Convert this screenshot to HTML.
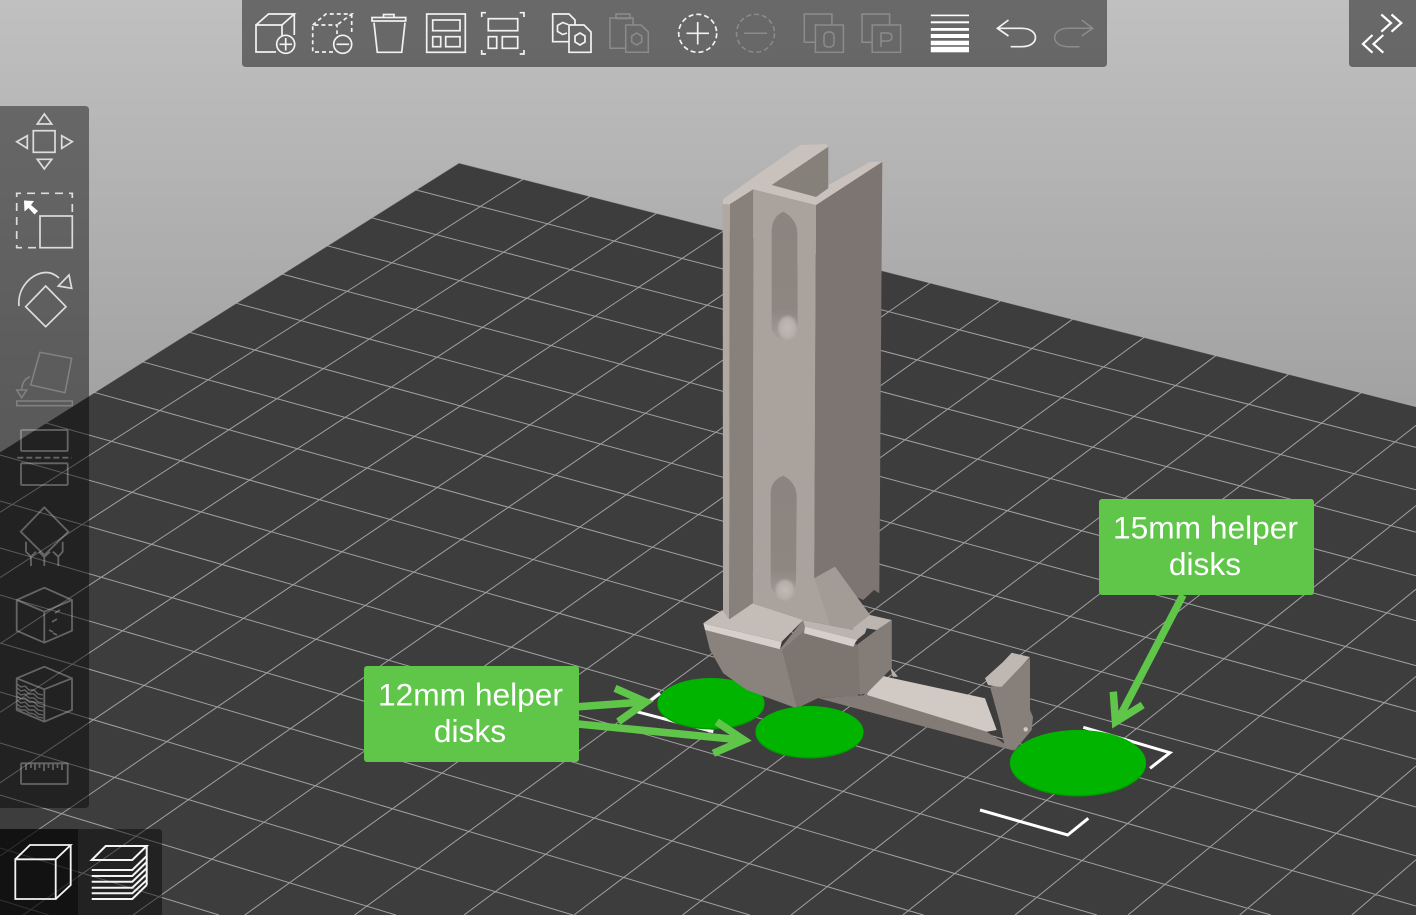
<!DOCTYPE html>
<html lang="en">
<head>
<meta charset="utf-8">
<title>3D build plate view</title>
<style>
html,body{margin:0;padding:0;width:1416px;height:915px;overflow:hidden;background:#aaa}
svg{display:block;width:1416px;height:915px;overflow:hidden}
text{font-family:"Liberation Sans",sans-serif;font-size:31.7px;fill:#fff;text-anchor:middle}
.w{fill:none;stroke:#f2f2f2;stroke-width:1.7}
.d{fill:none;stroke:#f2f2f2;stroke-width:1.5;opacity:.26}
.l{fill:none;stroke:#e6e6e6;stroke-width:1.8;opacity:.34}
</style>
</head>
<body>
<svg width="1416" height="915" viewBox="0 0 1416 915" xmlns="http://www.w3.org/2000/svg">
<defs>
<linearGradient id="bg" x1="0" y1="0" x2="0" y2="1">
<stop offset="0" stop-color="#c0c0c0"/><stop offset=".5" stop-color="#9e9e9e"/><stop offset="1" stop-color="#8a8a8a"/>
</linearGradient>
<linearGradient id="sl" x1="0" y1="0" x2="0" y2="1">
<stop offset="0" stop-color="#8b847f"/><stop offset=".75" stop-color="#8d8681"/><stop offset="1" stop-color="#a8a09b"/>
</linearGradient>
<radialGradient id="bl"><stop offset="0" stop-color="#c2bab5"/><stop offset=".7" stop-color="#b6aea9"/><stop offset="1" stop-color="#b3aba6" stop-opacity="0"/></radialGradient>
</defs>

<rect width="1416" height="915" fill="url(#bg)"/>
<polygon points="459,163 1416,406.7 1416,915 0,915 0,452" fill="#3d3d3d"/>
<path d="M0 452 L459 163 L1416 406.7" fill="none" stroke="#b8b8b8" stroke-width="1" opacity=".5"/>

<!-- grid -->
<path fill="none" stroke="#b9b9b9" stroke-width="1" opacity=".8" d="
M416.2 190 L1416 447.4 M371.2 217.7 L1416 489.8 M327 245.7 L1416 532.2 M282 274 L1416 575.8
M236.6 303.3 L1416 620.7 M189.6 332.3 L1416 665.6 M142.2 361.7 L1416 711.5 M94 392.3 L1416 759.1
M46 423 L1416 807 M0 455 L1416 855.9 M0 501 L1416 906 M0 548 L1270.8 915 M0 595 L1097 915
M0 643 L923.6 915 M0 692 L749.8 915 M0 743 L573 915 M0 795 L395.9 915 M0 848 L219 915 M0 900 L48.6 915
M523 179.3 L0 512.3 M590 196.4 L0 577.6 M656.5 213.3 L0 643.7 M724 230.5 L0 712.3
M792 247.8 L0 782.8 M861 265.4 L0 856 M930 283 L23 915 M1000.3 300.9 L133 915
M1072.5 319.3 L244.8 915 M1144 337.4 L354.6 915 M1215.7 355.7 L464 915 M1288.5 374.3 L574 915
M1361 392.7 L682.5 915 M1416 425.4 L791 915 M1416 505.6 L902.8 915 M1416 589.2 L1015 915
M1416 676.4 L1128 915 M1416 766 L1239.7 915 M1416 859.7 L1351.8 915"/>

<!-- white bounding-box corners -->
<g fill="none" stroke="#fff" stroke-width="3">
<path d="M660 693.3 L636.7 711.7 L713.3 731.7"/>
<path d="M1083.3 727.3 L1170 752.7 L1150 768.3"/>
<path d="M980 810 L1067.7 835 L1088.3 818.3"/>
</g>

<!-- disk 1 -->
<ellipse cx="711" cy="704.5" rx="53.5" ry="25" fill="#009c00"/>
<ellipse cx="711" cy="703" rx="53.5" ry="25" fill="#00b400"/>

<!-- model -->
<polygon points="818.3,698.3 866.7,695 986.7,731.7 1015,751" fill="#837b76"/>
<polygon points="878.3,675 985,698.3 996.7,730 986.7,731.7 866.7,695" fill="#d0c9c4"/>
<polygon points="890,666.7 898,676.7 892.7,676.7" fill="#b9b1ac"/>
<polygon points="990,686.7 1001,684 1030,658 1030,710 1033,717 1031.7,730 1015,750 1005,748 1000,723" fill="#877f7a"/>
<polygon points="985,678.3 1003,662 1011.7,652.7 1030,657 1001.7,686.7 998.3,686.7 988,685" fill="#bfb7b2"/>
<circle cx="1025.7" cy="729.3" r="2.2" fill="#cfc8c3"/>

<polygon points="879.3,593.3 874,590 863.3,600 814.3,578.3 816,205 882.3,161.7" fill="#7c7571"/>
<polygon points="705,630 780,649 803,620 856.7,645 876.7,630 891.7,620 891.7,668 866.7,693.3 818,698 796.7,708.3 746.7,690 723.3,673.3 710,650" fill="#8a827d"/>
<polygon points="782,650 805,630 858,645 864,682 858,696 818,698 796.7,708.3" fill="#7c7570"/>
<polygon points="858,645 876.7,630 891.7,620 891.7,668 866.7,693.3 860,695" fill="#847c77"/>

<polygon points="722.7,204 730,205 729.3,619.3 723,612" fill="#b0a8a3"/>
<polygon points="730,204 753.3,189.3 752.7,603.3 729.3,619.3" fill="#88807b"/>
<polygon points="753.3,189.3 816,205 814.3,578.3 835,566.7 870,615 853,630 803,620 752.7,603.3" fill="#aaa29d"/>
<polygon points="814.3,578.3 835,566.7 870,615 853.3,630 830,625" fill="#a39b96"/>

<polygon points="722.7,204 723.3,199 760,172.7 800,145 826.7,144 828.3,146.7 828.3,185 870,162 882.3,161.7 816,205 753.3,189.3 730,204" fill="#c9c1bc"/>
<polygon points="771.7,185 828.3,146.7 828.3,188.3 816,197" fill="#86807b"/>

<path d="M771.7 230 Q772.500 216 783.3 211.7 Q797 219 797.300 233 L797.700 323 Q795 338 790 342 Q778 342 771.700 330 Z" fill="url(#sl)"/>
<ellipse cx="787.500" cy="328" rx="11" ry="14" fill="url(#bl)"/>
<path d="M770.7 492 Q771.500 480 783.3 475.700 Q796 482 796.700 496 L796 580 Q794 595 790 600 Q777 600 770.700 586.700 Z" fill="url(#sl)"/>
<ellipse cx="785" cy="590" rx="11" ry="12" fill="url(#bl)"/>

<polygon points="803,620 853,630 870,615 856.7,641 805,627" fill="#bcb4af"/>
<polygon points="703.3,623.3 722.3,610 729.3,619.3 752.7,603.3 803.3,620 781.7,641.7" fill="#c4bcb7"/>
<polygon points="703.3,623.3 781.7,641.7 780,649.3 705,630" fill="#d6cfcb"/>
<polygon points="805,626.7 856.7,640 853.3,646.7 804,633.3" fill="#d6cfcb"/>
<polygon points="853,628 870,615 891.7,620 876.7,630 866.7,628.3 865,633.3 856.7,640" fill="#bcb4af"/>

<!-- disks 2 and 3 -->
<ellipse cx="809.5" cy="733" rx="54" ry="25.5" fill="#009c00"/>
<ellipse cx="809.5" cy="731.5" rx="54" ry="25.5" fill="#00b400"/>
<ellipse cx="1078" cy="764" rx="68" ry="32.5" fill="#009c00"/>
<ellipse cx="1078" cy="762.5" rx="68" ry="32.5" fill="#00b400"/>

<!-- panels -->
<path d="M242 0 H1107 V63 Q1107 67 1103 67 H246 Q242 67 242 63 Z" fill="#000" fill-opacity=".45"/>
<path d="M1349 0 H1416 V67 H1353 Q1349 67 1349 63 Z" fill="#000" fill-opacity=".45"/>
<path d="M0 106 H85 Q89 106 89 110 V804 Q89 808 85 808 H0 Z" fill="#000" fill-opacity=".44"/>
<path d="M0 829 H158 Q162 829 162 833 V915 H0 Z" fill="#000" fill-opacity=".44"/>
<rect x="0" y="829" width="78" height="86" fill="#000" fill-opacity=".45"/>

<!-- top toolbar icons -->
<g class="w">
<path d="M276 52 H256 V25 H282 V36 M256 25 L268.5 14 H294.3 L282 25 M294.3 14 V35"/>
<circle cx="285.7" cy="44.3" r="9"/><path d="M279.5 44.3 H292 M285.7 38 V50.5"/>
</g>
<g class="w">
<path stroke-dasharray="4 3" d="M333 52 H312.7 V25 H337 V34 M312.7 25 L326 14 H351.7 L337 25 M351.7 14 V35"/>
<circle cx="342.7" cy="44.3" r="9"/><path d="M336.5 44.3 H349"/>
</g>
<g class="w">
<path d="M374 22.7 L377.3 52.3 H401.7 L405 22.7"/>
<rect x="372" y="17.5" width="33.7" height="3.5"/>
<path d="M383.5 17.5 V14.5 H394 V17.5"/>
</g>
<g class="w">
<rect x="426.7" y="14" width="38.6" height="38.3"/>
<rect x="432.7" y="20" width="27.3" height="10.7"/>
<rect x="432.7" y="36.7" width="8" height="10"/>
<rect x="445.7" y="36.7" width="14.3" height="10"/>
</g>
<g class="w">
<path d="M481.7 17 V12.7 H486 M519.7 12.7 H524 V17 M524 50 V54 H519.7 M486 54 H481.7 V50"/>
<rect x="488.3" y="18.7" width="29.4" height="12"/>
<rect x="488.3" y="36.7" width="8.4" height="11.6"/>
<rect x="502.3" y="36.7" width="15.4" height="11.6"/>
</g>
<g class="w">
<path d="M569 41.7 H552.7 V14 H569 L575 20 V25"/>
<path d="M568 24.5 L562.7 22.5 L557.5 25.5 V31.5 L562.7 34.5 L567 33"/>
<path d="M569 25 H584 L591 32 V52.3 H569 Z"/>
<path d="M580 33 L585 36 V42 L580 45 L575 42 V36 Z"/>
</g>
<g class="d">
<path d="M625 48.3 H610 V18 H633 V25"/>
<rect x="616" y="14" width="14" height="4.5"/>
<path d="M625.7 25 H641 L648.3 32 V52.3 H625.7 Z"/>
<path d="M636.7 33 L641.7 36 V42 L636.7 45 L631.7 42 V36 Z"/>
</g>
<g class="w">
<circle cx="697.7" cy="33.3" r="19" stroke-dasharray="5 3"/>
<path d="M686.5 33.3 H709 M697.7 22 V44.5"/>
</g>
<g class="d">
<circle cx="755.5" cy="33.3" r="19" stroke-dasharray="5 3"/>
<path d="M744 33.3 H767"/>
</g>
<g class="d">
<path d="M815.4 42.3 H804.3 V14 H831.9 V25"/>
<rect x="815.4" y="25" width="28" height="27.3"/>
<rect x="824" y="32" width="10" height="15" rx="4"/>
</g>
<g class="d">
<path d="M872.2 42.3 H862 V14 H889.6 V25"/>
<rect x="872.2" y="25" width="28.4" height="27.3"/>
<path d="M881 47 V33 H887 Q892 33 892 37 Q892 41 887 41 H881"/>
</g>
<g fill="#fff">
<rect x="930.8" y="14.6" width="38.2" height="1.6"/>
<rect x="930.8" y="21.3" width="38.2" height="2"/>
<rect x="930.8" y="28" width="38.2" height="2.8"/>
<rect x="930.8" y="34" width="38.2" height="4"/>
<rect x="930.8" y="40.7" width="38.2" height="4.5"/>
<rect x="930.8" y="46.8" width="38.2" height="5.5"/>
</g>
<path class="w" d="M1008.5 20 L997.4 28.3 L1008.5 36 M997.4 28.3 H1021.8 C1040 28.3 1040 46.7 1021.8 46.7 H1010.7"/>
<path class="d" d="M1081.7 20 L1092.8 28.3 L1081.7 36 M1092.8 28.3 H1068.4 C1050 28.3 1050 46.7 1068.4 46.7 H1079.5"/>

<!-- collapse icon -->
<path fill="none" stroke="#fff" stroke-width="2.2" d="M1381.3 14.5 L1391 23 L1381.3 31.7 M1391.5 14.5 L1401.3 23 L1391.5 31.7 M1372.5 35 L1363 44 L1372.5 52.7 M1383.3 35 L1373.5 44 L1383.3 52.7"/>

<!-- left panel icons -->
<g class="w" stroke-opacity=".85">
<rect x="33.3" y="130.7" width="21.7" height="21.6"/>
<path d="M44.3 114 L37.3 124 H51.7 Z M37.3 159.3 H51.7 L44.3 169 Z M16.7 141.7 L27.3 135.7 V148.3 Z M61.7 135.7 V148.3 L72.3 141.7 Z"/>
</g>
<g class="w" stroke-opacity=".85">
<path stroke-dasharray="8 6" d="M36 247.7 H16.7 V193.3 H72.3 V212"/>
<rect x="40" y="216" width="32.3" height="31.7"/>
</g>
<polygon points="24,200.5 34,201 31,205 38,211 34.5,214.5 28.5,208 24.5,211.5" fill="#fff"/>
<g class="w" stroke-opacity=".85">
<polygon points="45.7,286 66,306.7 45.7,326.7 25.7,306.7"/>
<path d="M19 306 C17 288 32 272 47 272.5 C51 272.5 55 274.5 59 278"/>
<polygon points="69,275 71.7,288.3 58.3,286"/>
</g>
<g class="d">
<polygon points="40,352.3 71.7,358.3 65,392.7 30.7,385"/>
<rect x="16.7" y="401" width="55.6" height="4.7"/>
<path d="M30 376.7 C24 379 22 384 21.7 390"/>
<polygon points="16.7,390 26.7,390 21.7,397.7"/>
</g>
<g class="l">
<rect x="21" y="430" width="46.7" height="21" rx="1"/>
<path stroke-dasharray="6 3" d="M17.3 457.7 H71.7"/>
<rect x="21" y="463.3" width="46.7" height="21.7" rx="1"/>
</g>
<g class="l">
<polygon points="44.3,507.3 68.3,531.7 44.3,555 20.7,531.7"/>
<path d="M26 541.7 V551.7 L31 556.7 V566 M62.7 541.7 V551.7 L58.3 556.7 V566 M44.3 555 V566 M36 551.7 L31 556.7 M39 551.7 L44.3 557 L50 551.7 M53 551.7 L58.3 556.7"/>
</g>
<g class="l">
<polygon points="44.3,587.7 72,600 72,630.7 44.3,642.7 16.7,630.7 16.7,600"/>
<path d="M16.7 600 L44.3 611.7 L72 600 M44.3 611.7 V642.7"/>
<path d="M55 613 L60 610 M52 622 L57 619 M49 630 L53 632 M53 633 L57 635"/>
</g>
<g class="l">
<polygon points="44.3,666.7 72,678.3 72,710 44.3,721.7 16.7,710 16.7,678.3"/>
<path d="M16.7 678.3 L44.3 689.3 L72 678.3 M44.3 689.3 V721.7"/>
<path stroke-width="1.4" d="M17 684 l4 3 l4 -1 l4 4 l5 0 l4 4 l5 1 M17 688 l4 3 l4 -1 l4 4 l5 0 l4 4 l5 1 M17 692 l4 3 l4 -1 l4 4 l5 0 l4 4 l5 1 M17 696 l4 3 l4 -1 l4 4 l5 0 l4 4 l5 1 M17 700 l4 3 l4 -1 l4 4 l5 0 l4 4 l5 1 M17 704 l4 3 l4 -1 l4 4 l5 0 l4 4 l5 1 M17 708 l4 2 l4 0 l4 3 l5 1 l4 3 l5 1"/>
</g>
<g class="l">
<rect x="21" y="763.3" width="46.7" height="20.7" rx="1"/>
<path d="M26 763.3 V770 M31 763.3 V768 M35 763.3 V770 M39.5 763.3 V768 M44 763.3 V771 M48.5 763.3 V768 M53 763.3 V770 M57.5 763.3 V768 M62 763.3 V770"/>
</g>

<!-- view mode icons -->
<path fill="none" stroke="#f4f4f4" stroke-width="1.8" d="M15.3 859.3 H55.7 V899 H15.3 Z M15.3 859.3 L30 845 H70.7 L55.7 859.3 M70.7 845 V885 L55.7 899"/>
<g fill="none" stroke="#f4f4f4" stroke-width="2">
<path d="M91.7 860 L105.7 846 H146.7 L132.3 860 Z"/>
<path d="M91.7 870 H132.3 L146.7 856 M91.7 876 H132.3 L146.7 862 M91.7 881.7 H132.3 L146.7 868 M91.7 887.7 H132.3 L146.7 874 M91.7 893.3 H132.3 L146.7 880 M91.7 899 H132.3 L146.7 885 M146.7 846 V885"/>
</g>

<!-- arrows -->
<g fill="none" stroke="#5fc64a" stroke-width="7.5" stroke-linejoin="miter">
<path d="M578 706.7 L644 702"/>
<path d="M615 688.3 L646 702 L618.3 721.7"/>
<path d="M578 724 L742 740"/>
<path d="M716.7 721.7 L744 740 L713.3 753.3"/>
<path d="M1183 595 L1118 720"/>
<path d="M1113.3 691.7 L1115.5 722 L1142.7 705"/>
</g>

<!-- labels -->
<rect x="364" y="666" width="215" height="96" rx="3" fill="#5fc64a"/>
<text x="470.5" y="705.5">12mm helper</text>
<text x="470" y="742">disks</text>
<rect x="1099" y="499" width="215" height="96" rx="3" fill="#5fc64a"/>
<text x="1205.5" y="538.5">15mm helper</text>
<text x="1205" y="575">disks</text>
</svg>
</body>
</html>
